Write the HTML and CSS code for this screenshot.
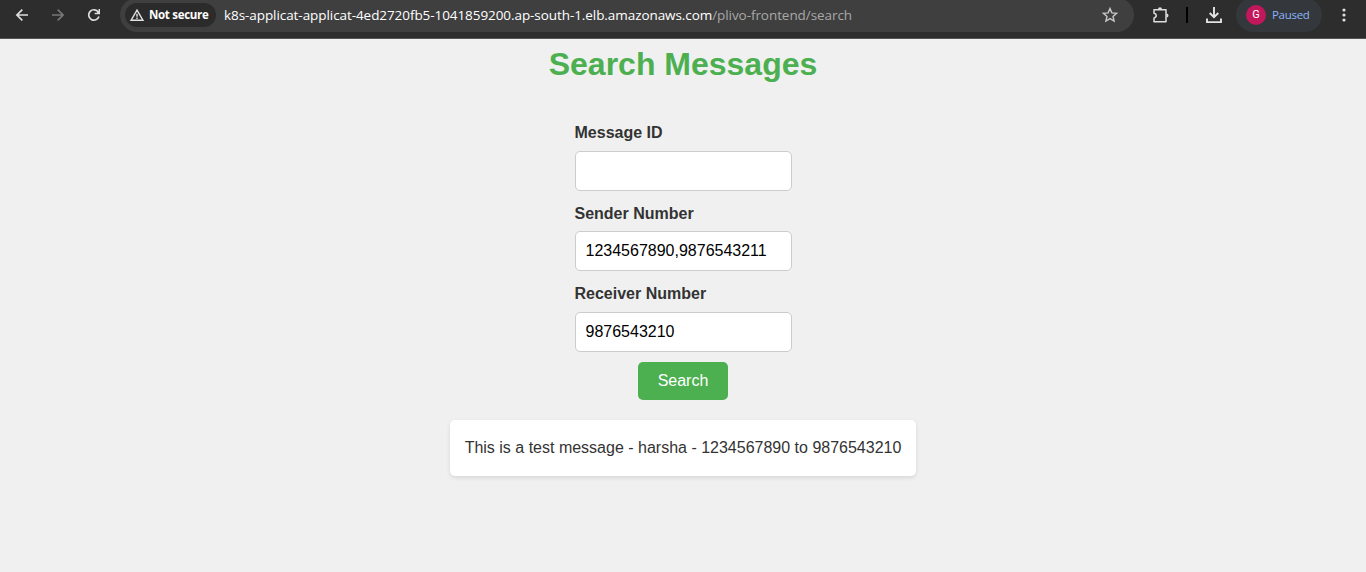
FILE: index.html
```
<!DOCTYPE html>
<html lang="en">
<head>
<meta charset="utf-8">
<title>Search Messages</title>
<link rel="stylesheet" href="styles.css">
</head>
<body>
<header class="toolbar">
  <svg class="nav" width="120" height="30" viewBox="0 0 120 30" fill="none" stroke-width="1.7">
    <path d="M28 15H17.200M22.300 9.600L16.900 15l5.400 5.400" stroke="#dedede"/>
    <path d="M52 15h10.800M57.700 9.600l5.400 5.400-5.400 5.400" stroke="#777"/>
    <path d="M98.300 12.200A5.200 5.200 0 1 0 98.900 16.400" stroke="#dedede"/>
    <path d="M100 9v5.300h-5.300v-1.500h2.200L98.500 11V9z" fill="#dedede"/>
  </svg>
  <div class="address">
    <div class="security">
      <svg width="14" height="14" viewBox="0 0 14 14" fill="none" stroke="#e3e3e3" stroke-width="1.400"><path d="M7 2.100L12.900 12.200H1.100ZM7 5.700V8.700M7 9.500V10.900"/></svg>
      <span class="secure-text">Not secure</span>
    </div>
    <div class="url"><span class="host">k8s-applicat-applicat-4ed2720fb5-1041859200.ap-south-1.elb.amazonaws.com</span><span class="path">/plivo-frontend/search</span></div>
    <svg class="star" width="18" height="18" viewBox="0 0 18 18" fill="none" stroke="#c7c7c7" stroke-width="1.400"><path d="M9 2.600l1.900 4.300 4.700.4-3.600 3.100 1.100 4.600L9 12.600 4.900 15 6 10.400 2.400 7.300l4.700-.4z"/></svg>
  </div>
  <svg class="extension" width="20" height="20" viewBox="0 0 20 20"><path d="M3 4.700h12v12H3v-3.700q2.200-.4 2.200-2.400T3 8.200z" fill="none" stroke="#dedede" stroke-width="1.500" stroke-linejoin="round"/><path d="M7 4.300a2 2 0 0 1 4 0zM15.500 8.600a2 2 0 0 1 0 4z" fill="#dedede"/></svg>
  <span class="divider"></span>
  <svg class="download" width="18" height="18" viewBox="0 0 18 18" fill="none" stroke="#e3e3e3" stroke-width="1.900"><path d="M9 1v10M4.700 7L9 11.200 13.300 7M2 12.500v3.600h14v-3.600"/></svg>
  <div class="profile"><span class="avatar">G</span><span class="status">Paused</span></div>
  <svg class="more" width="6" height="16" viewBox="0 0 6 16" fill="#dedede"><circle cx="3" cy="3" r="1.600"/><circle cx="3" cy="8" r="1.600"/><circle cx="3" cy="13" r="1.600"/></svg>
</header>
<main class="page">
  <h1 class="title">Search Messages</h1>
  <form class="search-form">
    <div class="field"><label class="label" for="message">Message ID</label><input class="input" id="message" type="text"></div>
    <div class="field"><label class="label" for="sender">Sender Number</label><input class="input" id="sender" type="text" value="1234567890,9876543211"></div>
    <div class="field"><label class="label" for="receiver">Receiver Number</label><input class="input" id="receiver" type="text" value="9876543210"></div>
    <button class="submit" type="button">Search</button>
  </form>
  <div class="result">This is a test message - harsha - 1234567890 to 9876543210</div>
</main>
</body>
</html>
```
FILE: styles.css
```
* { box-sizing: border-box; }
body {
  margin: 0;
  height: 572px;
  overflow: hidden;
  background: #f0f0f0;
  color: #333;
  font: 16px/1.6 "Liberation Sans", Arial, sans-serif;
}
.toolbar {
  display: flex;
  align-items: center;
  height: 39px;
  padding-bottom: 8px;
  background: #2d2d2d;
  border-bottom: 1px solid #555;
  font-family: "Open Sans", "Noto Sans", sans-serif;
}
.toolbar > * { flex-shrink: 0; }
.address {
  display: flex;
  align-items: center;
  width: 1014px;
  height: 34px;
  padding: 0 15px 0 5px;
  border-radius: 17px;
  background: #3f3f3f;
}
.security {
  display: flex;
  align-items: center;
  gap: 5px;
  width: 91px;
  height: 24px;
  padding-left: 5px;
  border-radius: 12px;
  background: #2b2b2b;
}
.secure-text {
  color: #fff;
  font-size: 11.500px;
  font-weight: 700;
  letter-spacing: -.3px;
  white-space: nowrap;
}
.url {
  flex: 1;
  margin-left: 8px;
  padding-top: 2px;
  color: #fff;
  font-size: 13.500px;
  letter-spacing: -.07px;
  white-space: nowrap;
}
.path { color: #a8a8a8; }
.extension { margin-left: 17px; }
.divider {
  width: 2px;
  height: 16px;
  margin-left: 15px;
  background: #000;
}
.download { margin-left: 17px; }
.profile {
  display: flex;
  align-items: center;
  gap: 6px;
  width: 86px;
  height: 34px;
  margin-left: 13px;
  padding-left: 10px;
  border-radius: 17px;
  background: #34373c;
}
.avatar {
  width: 20px;
  height: 20px;
  border-radius: 50%;
  background: #c2185b;
  color: #fff;
  font: 11px/20px Roboto, sans-serif;
  text-align: center;
}
.status { padding-top: 1px; color: #8ab4f8; font-size: 11.500px; letter-spacing: -.3px; }
.more { margin-left: 19px; }
.page { display: flex; flex-direction: column; align-items: center; }
.title { margin: 0 0 30px; color: #4caf50; font-size: 32px; line-height: 51.200px; }
.search-form { display: flex; flex-direction: column; align-items: center; gap: 10px; }
.field { display: flex; flex-direction: column; gap: 5px; width: 217px; }
.label { font-weight: 700; line-height: 25.600px; }
.input {
  width: 100%;
  height: 40px;
  padding: 10px;
  border: 1px solid #ccc;
  border-radius: 5px;
  background: #fff;
  color: #000;
  font: 16px "Liberation Sans", Arial, sans-serif;
}
.submit {
  width: 90px;
  height: 38px;
  padding: 0;
  border: 0;
  border-radius: 5px;
  background: #4caf50;
  color: #fff;
  font: 16px "Liberation Sans", Arial, sans-serif;
}
.result {
  margin-top: 20px;
  padding: 15px;
  border-radius: 5px;
  background: #fff;
  box-shadow: 0 2px 4px rgba(0, 0, 0, .1);
}
```
